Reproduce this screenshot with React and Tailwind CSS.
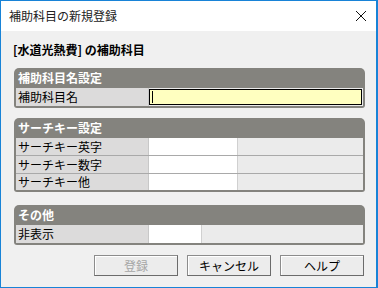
const font = { fontFamily: '"Noto Sans CJK JP", "Noto Sans", sans-serif' };

function Group({ title, children, className = "" }) {
  return (
    <div className={`bg-[#84837e] rounded-t-[5px] rounded-b-[3px] px-[2px] pb-[2px] ${className}`}>
      <div className="h-[20px] flex items-center pl-[2px] text-white font-bold text-[12px] leading-none">
        {title}
      </div>
      <div className="flex flex-col gap-px bg-[#a9a9a9]">{children}</div>
    </div>
  );
}

function Label({ children }) {
  return (
    <div className="w-[133px] shrink-0 bg-[#dcdbdb] border-r border-[#c8c8c8] flex items-center pl-[2px] text-[12px] leading-none text-black">
      {children}
    </div>
  );
}

function Row({ label, white = 89, h = "h-[17px]" }) {
  return (
    <div className={`flex ${h}`}>
      <Label>{label}</Label>
      <div className="bg-white border-r border-[#d0d0d0]" style={{ width: white }} />
      <div className="flex-1 bg-[#ebebeb]" />
    </div>
  );
}

function Button({ children, disabled }) {
  return (
    <button
      className={`w-[84px] h-[21px] border border-[#8c8c8c] border-r-[#6b6b6b] border-b-[#6b6b6b] bg-[#ececec] shadow-[inset_1px_1px_0_#ffffff] text-[12px] leading-none ${
        disabled ? "text-[#a6a6a6]" : "text-black"
      }`}
    >
      {children}
    </button>
  );
}

export default function App() {
  return (
    <div className="w-[378px] h-[288px] bg-white" style={font}>
      <div className="w-[378px] h-[288px] border border-[#1883d7] border-r-2 flex flex-col">
        <div className="h-[30px] bg-white flex items-center justify-between pl-[8px] pr-[7px]">
          <span className="text-[12px] text-[#222] leading-none">補助科目の新規登録</span>
          <svg width="12" height="12" viewBox="0 0 12 12" className="mr-[2px]">
            <path d="M1 1L11 11M11 1L1 11" stroke="#111" strokeWidth="1" />
          </svg>
        </div>
        <div className="flex-1 bg-[#f0f0f0] pl-[12px] pr-[11px] pt-[9px]">
          <div className="h-[19px] flex items-center font-bold text-[12px] leading-none text-black mb-[9px]">
            [水道光熱費] の補助科目
          </div>
          <Group title="補助科目名設定" className="ml-px">
            <div className="flex h-[18px]">
              <Label>補助科目名</Label>
              <div className="flex-1 bg-[#ebebeb] py-px pr-px">
                <div className="h-full bg-[#ffffc0] border border-black flex items-center pl-[2px]">
                  <div className="w-px h-[12px] bg-black" />
                </div>
              </div>
            </div>
          </Group>
          <Group title="サーチキー設定" className="ml-px mt-[10px]">
            <Row label="サーチキー英字" />
            <Row label="サーチキー数字" />
            <Row label="サーチキー他" h="h-[16px]" />
          </Group>
          <Group title="その他" className="ml-px mt-[13px]">
            <Row label="非表示" white={53} h="h-[18px]" />
          </Group>
          <div className="flex justify-end gap-[9px] mt-[10px] pr-[1px]">
            <Button disabled>登録</Button>
            <Button>キャンセル</Button>
            <Button>ヘルプ</Button>
          </div>
        </div>
      </div>
    </div>
  );
}
